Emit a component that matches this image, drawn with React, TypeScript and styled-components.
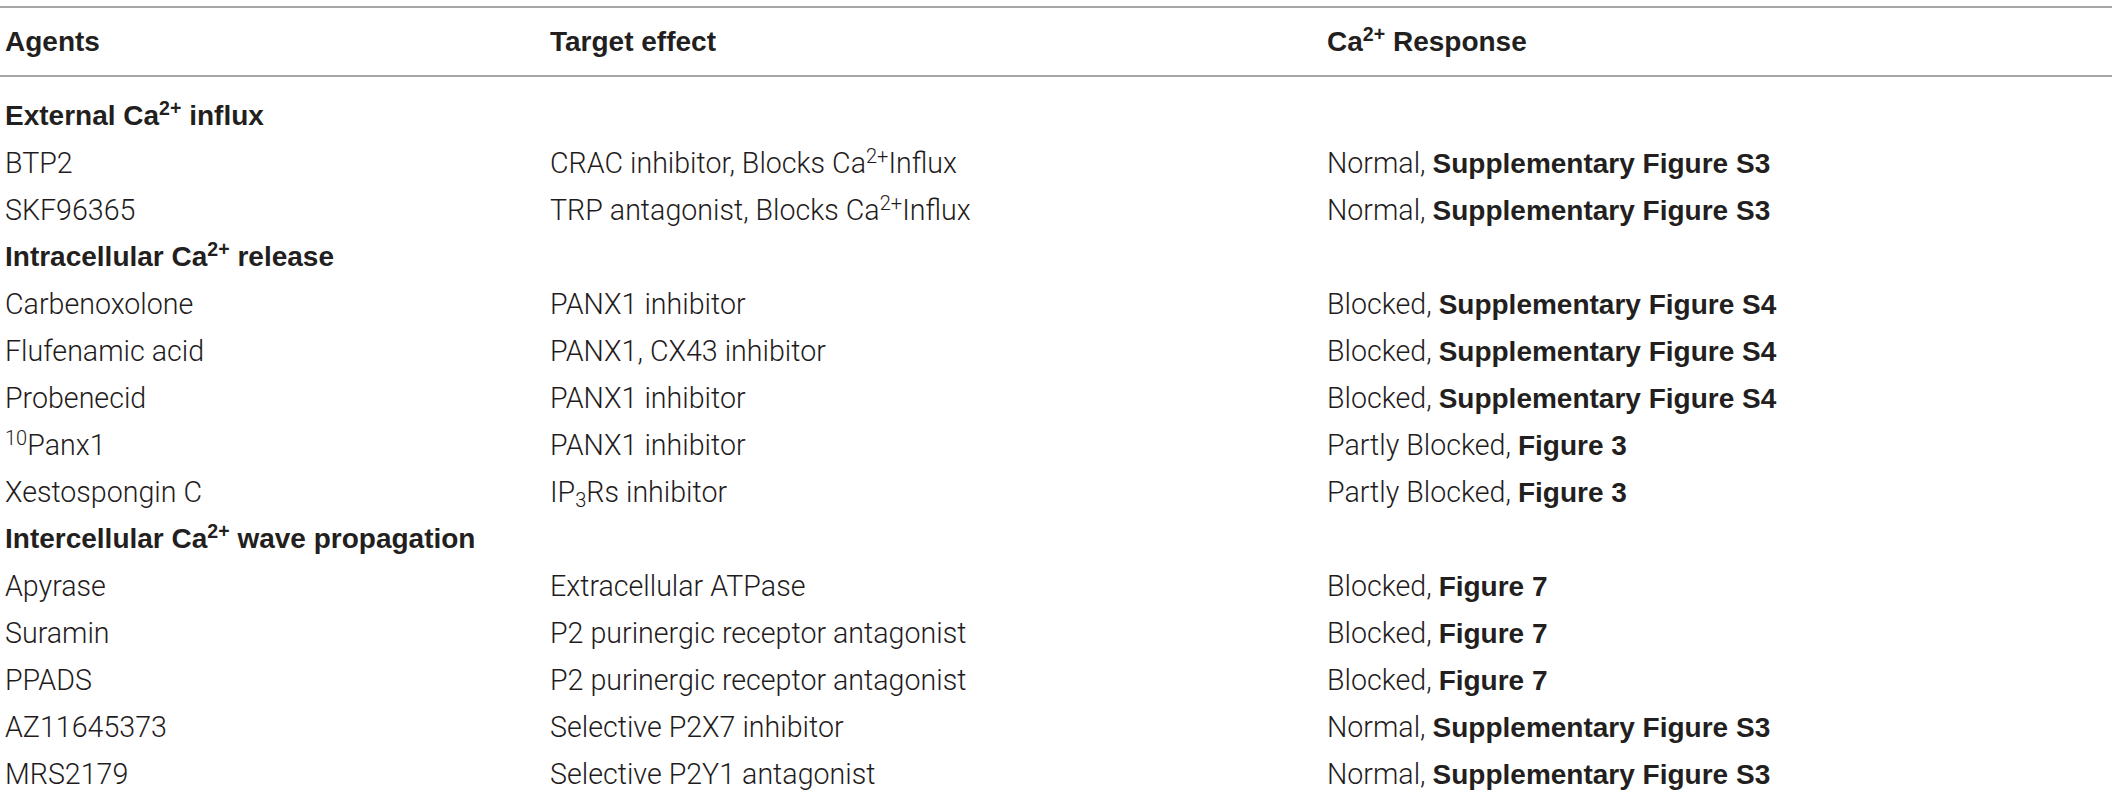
import React from "react";
import styled, { createGlobalStyle } from "styled-components";

const Global = createGlobalStyle`
  html, body { margin: 0; padding: 0; background: #ffffff; }
  body { font-family: "Liberation Sans", Arial, sans-serif; color: #231f20; }
`;

const Table = styled.table`
  width: 2112px;
  margin-top: 6px;
  border-collapse: collapse;
  table-layout: fixed;
  font-size: 28px;
  color: #231f20;
`;

const HeadRow = styled.tr`
  border-top: 2px solid #a6a6a6;
  border-bottom: 2px solid #a6a6a6;
`;

const HeadCell = styled.th<{ $w?: number }>`
  width: ${(p) => (p.$w ? `${p.$w}px` : "auto")};
  height: 69px;
  padding: 0 0 0 5px;
  text-align: left;
  font-family: "Liberation Sans", Arial, sans-serif;
  font-weight: 700;
  vertical-align: middle;
  box-sizing: border-box;
`;

const Row = styled.tr<{ $first?: boolean }>`
  height: ${(p) => (p.$first ? "63px" : "47px")};
`;

const Cell = styled.td<{ $first?: boolean }>`
  padding: ${(p) => (p.$first ? "16px" : "0")} 0 0 5px;
  vertical-align: middle;
  white-space: nowrap;
  font-family: Roboto, "Liberation Sans", sans-serif;
  font-weight: 300;
  font-size: 28.6px;
  color: #1f1c1d;
`;

const SectionCell = styled(Cell)`
  font-family: "Liberation Sans", Arial, sans-serif;
  font-weight: 700;
  font-size: 28px;
  color: #231f20;
`;

const Strong = styled.b`
  font-family: "Liberation Sans", Arial, sans-serif;
  font-weight: 700;
  font-size: 28px;
  color: #231f20;
`;

const Sup = styled.sup`
  font-size: 0.7em;
  line-height: 0;
  vertical-align: 0.5em;
`;

const Sub = styled.sub`
  font-size: 0.7em;
  line-height: 0;
  vertical-align: -0.25em;
`;

const Ca = () => (
  <>
    Ca<Sup>2+</Sup>
  </>
);

type Item =
  | { kind: "section"; title: React.ReactNode }
  | { kind: "row"; agent: React.ReactNode; target: React.ReactNode; result: string; ref: string };

const items: Item[] = [
  { kind: "section", title: <>External <Ca /> influx</> },
  { kind: "row", agent: "BTP2", target: <>CRAC inhibitor, Blocks <Ca />Influx</>, result: "Normal", ref: "Supplementary Figure S3" },
  { kind: "row", agent: "SKF96365", target: <>TRP antagonist, Blocks <Ca />Influx</>, result: "Normal", ref: "Supplementary Figure S3" },
  { kind: "section", title: <>Intracellular <Ca /> release</> },
  { kind: "row", agent: "Carbenoxolone", target: "PANX1 inhibitor", result: "Blocked", ref: "Supplementary Figure S4" },
  { kind: "row", agent: "Flufenamic acid", target: "PANX1, CX43 inhibitor", result: "Blocked", ref: "Supplementary Figure S4" },
  { kind: "row", agent: "Probenecid", target: "PANX1 inhibitor", result: "Blocked", ref: "Supplementary Figure S4" },
  { kind: "row", agent: <><Sup>10</Sup>Panx1</>, target: "PANX1 inhibitor", result: "Partly Blocked", ref: "Figure 3" },
  { kind: "row", agent: "Xestospongin C", target: <>IP<Sub>3</Sub>Rs inhibitor</>, result: "Partly Blocked", ref: "Figure 3" },
  { kind: "section", title: <>Intercellular <Ca /> wave propagation</> },
  { kind: "row", agent: "Apyrase", target: "Extracellular ATPase", result: "Blocked", ref: "Figure 7" },
  { kind: "row", agent: "Suramin", target: "P2 purinergic receptor antagonist", result: "Blocked", ref: "Figure 7" },
  { kind: "row", agent: "PPADS", target: "P2 purinergic receptor antagonist", result: "Blocked", ref: "Figure 7" },
  { kind: "row", agent: "AZ11645373", target: "Selective P2X7 inhibitor", result: "Normal", ref: "Supplementary Figure S3" },
  { kind: "row", agent: "MRS2179", target: "Selective P2Y1 antagonist", result: "Normal", ref: "Supplementary Figure S3" },
];

export default function App() {
  return (
    <>
      <Global />
      <Table>
        <thead>
          <HeadRow>
            <HeadCell $w={545}>Agents</HeadCell>
            <HeadCell $w={777}>Target effect</HeadCell>
            <HeadCell>
              <Ca /> Response
            </HeadCell>
          </HeadRow>
        </thead>
        <tbody>
          {items.map((it, i) => {
            const first = i === 0;
            if (it.kind === "section") {
              return (
                <Row key={i} $first={first}>
                  <SectionCell $first={first} colSpan={3}>
                    {it.title}
                  </SectionCell>
                </Row>
              );
            }
            return (
              <Row key={i} $first={first}>
                <Cell $first={first}>{it.agent}</Cell>
                <Cell $first={first}>{it.target}</Cell>
                <Cell $first={first}>
                  {it.result}, <Strong>{it.ref}</Strong>
                </Cell>
              </Row>
            );
          })}
        </tbody>
      </Table>
    </>
  );
}
